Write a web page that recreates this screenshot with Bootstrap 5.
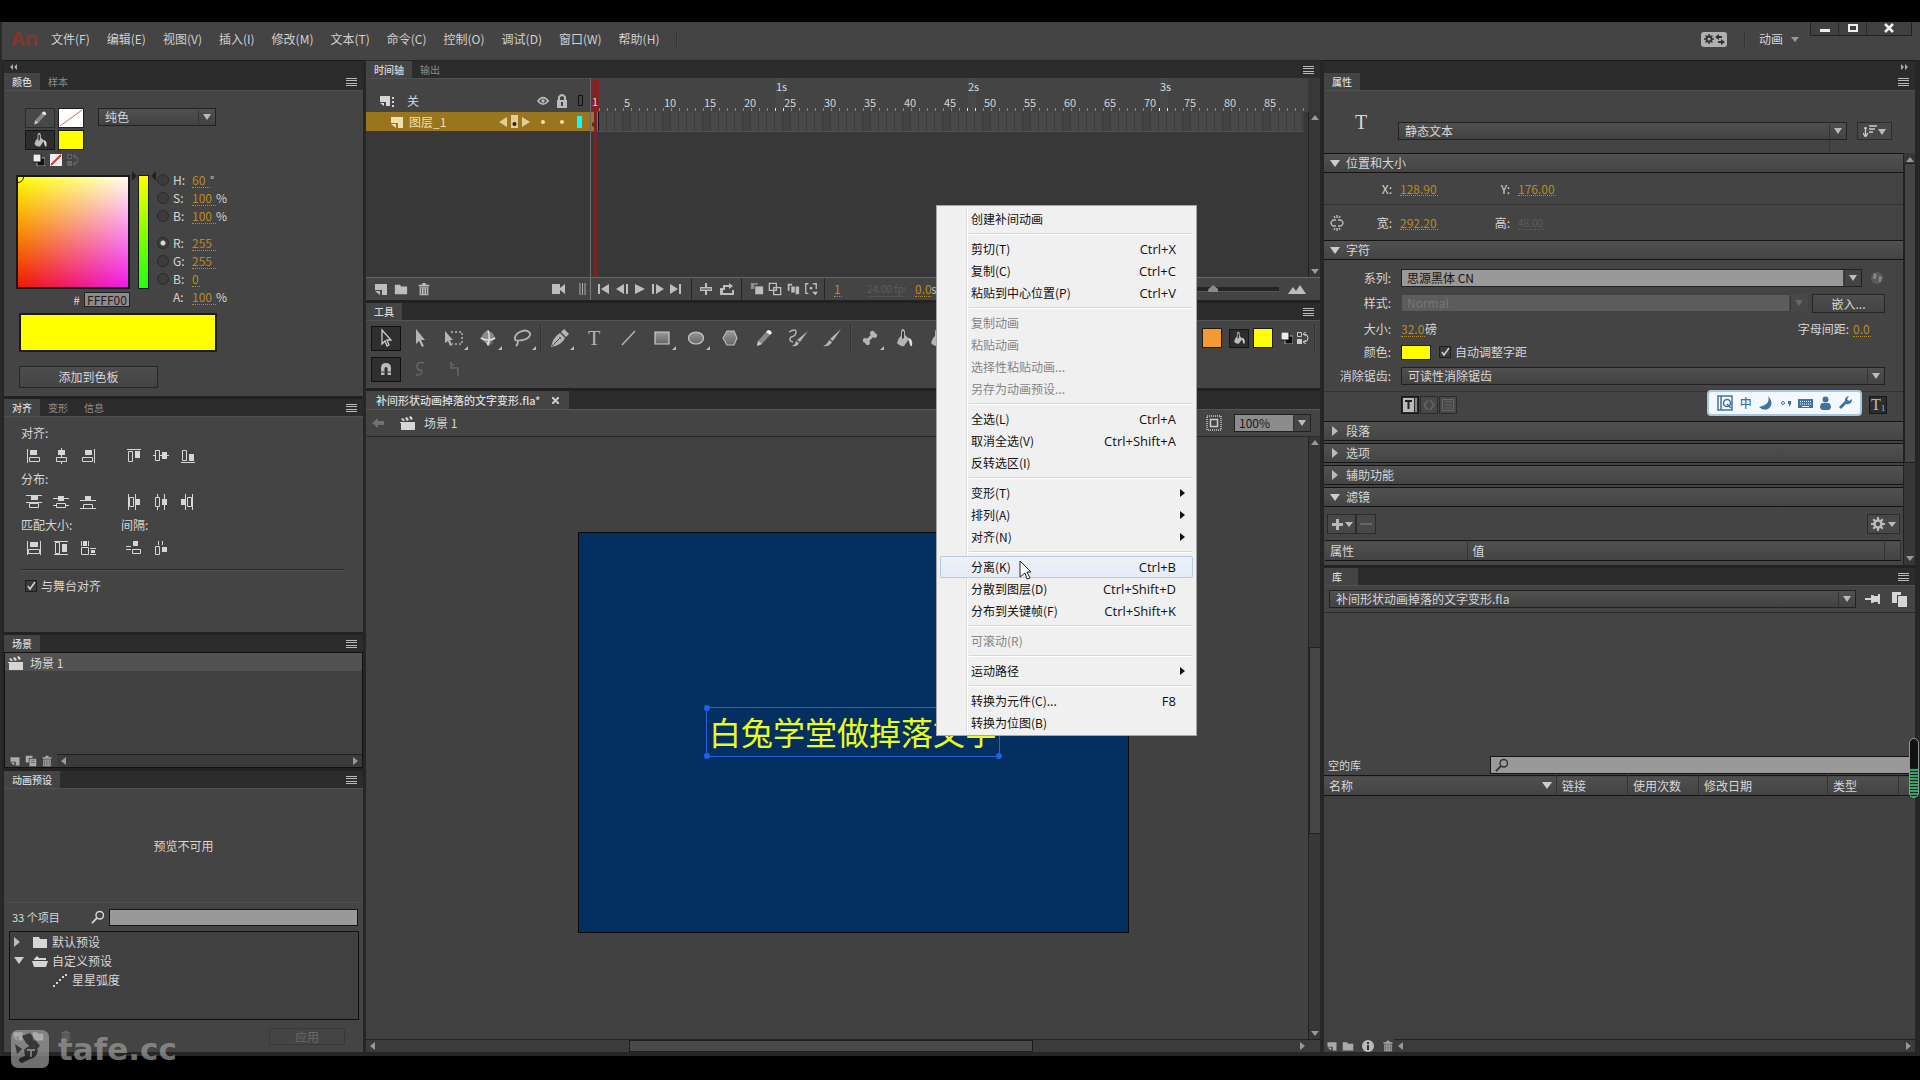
<!DOCTYPE html>
<html lang="zh-CN">
<head>
<meta charset="utf-8">
<meta name="viewport" content="width=device-width, initial-scale=1">
<title>Animate - 补间形状动画掉落的文字变形.fla</title>
<link href="https://cdn.jsdelivr.net/npm/bootstrap@5.3.0/dist/css/bootstrap.min.css" rel="stylesheet">
<style>
:root{--pn:#444;--strip:#2c2c2c;--edge:#1c1c1c;--ink:#d6d6d6;--hot:#b98a1e}
body{margin:0;height:100vh;background:#000;color:var(--ink);font:12px/18px "Noto Sans CJK SC","Noto Sans",sans-serif;overflow:hidden}
button,input,select{font:inherit;color:inherit;border-radius:0;padding:0;margin:0}
button{background:none;border:0}
svg{display:block;fill:currentColor;flex:none}
.i16{width:16px;height:16px}.i12{width:12px;height:12px}.i14{width:14px;height:14px}.i20{width:20px;height:20px}
.appwin{margin:22px 0 24px;background:#3a3a3a;border-left:2px solid #2a2a2a;min-height:0}
.menubar{height:38px;background:var(--pn);padding-bottom:4px}
.menubar nav{gap:17px;padding-left:9px}
.menubar .wsp{gap:13px;padding-right:11px}
.menubar a{color:#d0d0d0;text-decoration:none}
.logo-an{font:bold 20px/24px "Open Sans",sans-serif;color:#83362f;width:40px;padding-left:9px}
.vsep{width:1px;height:16px;background:#333;border-right:1px solid #4c4c4c;box-sizing:content-box}
.winbtns{height:14px;border:1px solid #222;border-top:0;margin-right:8px;background:#404040}
.winbtns button{height:13px;width:28px;border-right:1px solid #2a2a2a;color:#eee;padding:0}
.winbtns button:last-child{width:44px;border:0}
.cols{gap:3px;padding:0 5px 4px 2px;background:#262626;min-height:0}
.leftcol{width:359px}.rightcol{width:591px;margin-left:1px}
.midcol{min-width:0;padding-top:1px}
.strip{height:13px;background:#2b2b2b;border-top:1px solid var(--edge);color:#aaa;padding:0 6px}
.tabs{height:17px;background:var(--strip);font-size:10px;line-height:17px;color:#8e8e8e;padding-right:5px}
.tabs button{padding:0 8px;height:17px;line-height:15px}
.tabs .on{background:#444;color:#d8d8d8;font-weight:500}
.tabs .burger{margin-left:auto;color:#bbb;padding:0}
.panel{background:var(--pn);border-top:1px solid #505050}
.panelgap{border-top:3px solid #222}
.combo{appearance:none;background:linear-gradient(#505050,#424242);border:1px solid #222;height:18px;line-height:16px;padding:0 20px 0 6px}
.combowrap{position:relative}
.combowrap select{width:100%}
.combowrap::after{content:"";position:absolute;right:5px;top:6px;border:4px solid transparent;border-top:6px solid #bbb;border-bottom:0;pointer-events:none}
.combowrap::before{content:"";position:absolute;right:17px;top:2px;bottom:2px;border-left:1px solid #333;pointer-events:none}
.kindsel{width:118px;margin-left:14px}
.toolbtn{display:flex;align-items:center;justify-content:center;border:1px solid #2c2c2c;background:#484848;color:#bbb}
.toolbtn.down{background:#2d2d2d;border-color:#161616}
.swatch{border:1px solid #1c1c1c}
.yel{background:#ff0}.org{background:#f59a33}
.sq{width:20px;height:20px}
.hot{background:none;border:0;border-bottom:1px dotted var(--hot);color:var(--hot);height:15px;line-height:14px;padding:0}
.hot:disabled{color:#5c5c5c;border-color:#5c5c5c;-webkit-text-fill-color:#5c5c5c;font-size:10px}
.w8{width:8px}.w16{width:18px}.w22{width:24px}.w34{width:38px}
.cbody{height:306px;padding:17px 0 0 21px}
.pair{gap:2px 3px;display:grid;grid-template-columns:30px 26px;grid-auto-rows:20px}
.chips{gap:5px;margin:4px 0 0 8px}
.picker{margin:5px 0 0 -9px}
.pick{width:114px;height:114px;border:2px solid #181818;background:linear-gradient(90deg,#000,#00e),linear-gradient(#ff0,#f01800);background-blend-mode:screen;position:relative;overflow:hidden}
.pick::after{content:"";position:absolute;left:-6px;top:-6px;width:12px;height:12px;border:1px solid #222;border-radius:50%}
.hue{width:11px;height:114px;border:1px solid #181818;background:linear-gradient(#ff0,#8f0 50%,#2f1);position:relative}
.hue::before,.hue::after{content:"";position:absolute;top:-5px;border:5px solid transparent}
.hue::before{left:-7px;border-left-color:#222;border-right:0}.hue::after{right:-8px;border-right-color:#222;border-left:0}
.vals{margin-left:8px}
.vals>div{height:18px;display:flex;align-items:center}
.vals .gaptop{margin-top:9px}
.vals label{width:23px;padding-left:4px}
.vals .noradio{width:12px}
.hexrow{height:15px;line-height:15px;margin-top:3px}
.hexbox{width:46px;height:15px;background:#8d8a8d;color:#1d1d1d;border:1px solid #222;text-align:center;line-height:13px}
.bigsw{width:198px;height:39px;margin:6px 0 14px -6px;border-width:2px}
.addbtn{width:139px;margin-left:-6px}
input[type=radio]{appearance:none;width:12px;height:12px;border:1px solid #2b2b2b;border-radius:50%;background:#3c3c3c}
input[type=radio]:checked{background:radial-gradient(circle,#d8d8d8 2px,#3c3c3c 3px)}
input[type=checkbox]{appearance:none;width:12px;height:12px;border:1px solid #1e1e1e;background:#3b3b3b url("data:image/svg+xml,%3Csvg xmlns='http://www.w3.org/2000/svg' viewBox='0 0 10 10'%3E%3Cpath d='M2 5l2 3 5-7' fill='none' stroke='%23ccc' stroke-width='1.6'/%3E%3C/svg%3E")}
.flatbtn{border:1px solid #262626;background:linear-gradient(#4d4d4d,#434343);height:22px;line-height:20px;text-align:center}
.flatbtn:disabled{color:#686868;border-color:#3a3a3a;background:#444}
.applybtn{width:76px;height:17px;line-height:15px}
.embedbtn{width:73px;height:19px;line-height:17px}
.abody{height:216px;padding:5px 0 0 17px}
.abody .lb{height:22px;line-height:22px}
.abody .ic{height:24px;display:flex;align-items:center;margin-left:-1px}
.abody .ic button{width:27px;display:flex;justify-content:center}
.abody .half{width:100px}
.rule{height:2px;background:#2e2e2e;border-bottom:1px solid #505050;margin:9px 18px 4px 0}
.listbox{background:#404040;border:1px solid #111}
.sbody{height:116px}
.sbody .item{background:#515151;height:18px;gap:6px;padding:1px 0 0 3px}
.sicons{width:52px}
.foot{height:13px;color:#aaa}
.sbar{background:#3b3b3b;border-top:1px solid #222;color:#777}
.search{background:#999;border:1px solid #151515;color:#111;height:17px}
.preview{height:113px}
.findrow{padding:5px 5px 5px 8px;border-top:1px solid #4c4c4c}
.findrow span{font-size:11px;width:79px}
.tree{margin:0 4px 0 5px}
.tree>div{height:19px;display:flex;align-items:center}
.tree .kid{padding-left:42px}
.pfoot{height:32px;padding:0 18px 0 8px}
/* timeline */
.tl{height:199px;background:#383838}
.tlhead{height:34px;background:#444}
.layhead{padding:10px 6px 0 13px;border-top:1px solid #505050}
.lay{width:225px;border-right:1px solid #6a6a6a}
.layrow{height:19px;background:#99761d;color:#f2dfb0;padding:0 8px 0 23px}
.layrow .tri-l,.layrow .tri-r{border-width:5px}
.layrow .tri-l{border-right:8px solid #e4cc96;border-left:0}
.layrow .tri-r{border-left:8px solid #e4cc96;border-right:0}
.ruler{height:34px;background:#444;display:flex;overflow:hidden;margin-right:4px;padding-left:1px}
.ruler i{flex:none;width:8px;position:relative;font-style:normal;font-size:11px;white-space:nowrap}
.ruler i::after{content:"";position:absolute;right:0;bottom:1px;width:1px;height:3px;background:#888}
.ruler .sec{background:#494949}.ruler .sec::after{background:#fff;box-shadow:-8px 0 #fff}
.ruler b{position:absolute;left:0;font-weight:400;line-height:14px}
.ruler .fr{bottom:3px}.ruler .se{top:1px}
.frames{height:20px;margin-right:4px;background:repeating-linear-gradient(90deg,transparent 0 7px,#3b3b3b 7px 8px),repeating-linear-gradient(90deg,#484848 0 32px,#424242 32px 40px);border-bottom:1px solid #525252}
.phead{left:-2px;top:2px;width:10px;height:32px;background:#7c2426;border:1px solid #902226;line-height:40px;font-size:11px;padding-left:2px}
.pline{left:3px;top:34px;bottom:0;width:3px;background:#752528}
.pkey{left:0;top:34px;width:8px;height:19px;background:#a5722f;border-right:1px solid #111}
.pkey::after{content:"";position:absolute;left:1px;top:10px;width:5px;height:5px;border-radius:50%;background:#6d1d12}
.vbar{width:12px;background:#373737;border-left:1px solid #222;display:flex;flex-direction:column;align-items:center;justify-content:space-between;color:#888;padding:3px 0}
.vbar.under{margin-top:34px}
.tri-u,.tri-d{border:4px solid transparent;width:0;height:0}
.tri-u{border-bottom:5px solid #999;border-top:0}.tri-d{border-top:5px solid #999;border-bottom:0}
.tri-l,.tri-r{border:4px solid transparent;width:0;height:0}
.tri-l{border-right:5px solid #999;border-left:0}.tri-r{border-left:5px solid #999;border-right:0}
.ctl{height:23px;border-top:1px solid #686868;background:#444;color:#bdbdbd}
.ctl .layctl{width:225px;border-right:1px solid #777;height:22px;padding:0 4px 0 7px;gap:5px}
.ctl .seg{height:22px;display:flex;align-items:center;border-right:1px solid #262626;padding-left:8px}
.ctl .play{width:101px;padding-left:4px}.ctl .play button{width:18px}
.ctl .loop{width:50px;gap:8px}.ctl .onion{width:83px;gap:4px}
.ctl button,.tools button{display:flex;align-items:center;justify-content:center}
.fno{margin-left:9px}.fps{width:39px;margin-left:25px}.fsec{width:16px;margin-left:9px}
.hill{margin:0 14px 0 9px}
.zoomsl{appearance:none;height:5px;background:#252525;width:108px;border-bottom:1px solid #555}
.zoomsl::-webkit-slider-thumb{appearance:none;width:10px;height:7px;background:#8a8a8a;clip-path:polygon(50% 0,100% 60%,100% 100%,0 100%,0 60%)}
.tools{height:68px;border-top:1px solid #525252;background:#444;padding:4px 3px 0 5px;color:#b5b5b5}
.tools .trow{height:26px;margin-bottom:5px}
.tools .t{width:34px;height:26px;position:relative}
.tools .more::after{content:"";position:absolute;right:3px;bottom:1px;border:2px solid transparent;border-right-color:#bbb;border-bottom-color:#bbb}
.tools .box{width:30px;height:25px;border:1px solid #111;background:#2f2f2f;margin-right:2px}
.tools .vsep{height:28px;margin:0 1px}
.tools .off{color:#666}
.tglyph{font:20px/24px 'Liberation Serif',serif!important}
.fillbtn{width:20px;height:19px;margin:0 4px 0 7px}
.doctab{height:18px;background:var(--strip);font-size:11px;font-weight:500}
.doctab .on{background:#444;padding:0 10px;gap:12px;line-height:17px;color:#dcdcdc}
.scenebar{height:28px;background:#444;border-top:1px solid #555;border-bottom:1px solid #2b2b2b;padding:0 9px 0 6px}
.zoombox{width:77px;margin-left:12px}
.zoombox select{background:linear-gradient(90deg,#8c8c8c 58px,#444 58px);color:#1a1a1a;padding-left:4px}
.work{background:#414141;padding:0 0 11px 33px}
.stage{width:551px;height:401px;background:#042f61;border:1px solid #0a0a0a}
.txt{width:294px;height:50px;border:1px solid #2a5fd6;color:#e9fb22;font-size:32px;line-height:46px;padding-left:2px;white-space:nowrap;position:relative;margin:-2px 0 0 127px}
.txt i{position:absolute;width:6px;height:6px;border-radius:50%;background:#1a62f0}
.txt .tl-h{left:-3px;top:-3px}.txt .bl-h{left:-3px;bottom:-3px}.txt .br-h{right:-3px;bottom:-3px}
.vthumb{flex:none;width:12px;height:187px;background:#454545;border:1px solid #222;margin-top:4px}
.hbar{height:13px;padding:0 15px 0 4px}
.hthumb{width:404px;height:12px;background:#4a4a4a;border:1px solid #1c1c1c;margin-right:14px}
/* properties */
.kind{height:63px;padding-left:31px}
.kind .big{padding-top:19px;width:43px}
.kind .combowrap{margin-top:31px}
.kind .toolbtn{width:35px;height:18px;margin:31px 23px 0 10px}
.props{height:412px;background:#444}
.sect{height:20px;border:1px solid #141414;border-width:1px 0;background:linear-gradient(#515151,#444);line-height:18px;padding-left:6px;gap:6px;display:flex;align-items:center;width:100%;text-align:left}
.sect+.sect{margin-top:2px}
.caret-d{border:5px solid transparent;border-top:7px solid #ccc;border-bottom:0}
.caret-r{border:5px solid transparent;border-left:6px solid #bbb;border-right:0;margin:0 2px}
.xy{height:32px;border-bottom:1px solid #333}.wh{height:35px}
.xy label,.wh label{width:68px;text-align:right;margin-right:8px}
.xy .hot+label,.wh .hot+label{width:72px}
.wh svg{margin-left:5px}.wh svg+label{width:47px}
.wh .hot:disabled{width:28px}
.prow{display:flex;align-items:center;padding-left:77px;height:24px}
.plab{margin-left:-77px;width:67px;text-align:right;margin-right:10px;flex:none}
.r1{margin-top:8px;height:20px}.r2{margin-top:4px;height:22px}.r3{margin-top:4px;height:22px}
.r6{margin-top:3px;height:30px;border-top:1px solid #333;gap:1px;padding-bottom:4px}
.r3 .w16{margin:0 32px 0 4px}
.lightsel{width:461px}.dimsel{width:407px}.aasel{width:484px}
.lightsel select{background:linear-gradient(#999,#999);border-right:19px solid #444;color:#151515;outline:1px solid #222;outline-offset:-1px;padding-left:5px}
.dimsel select{background:#5c5c5c;color:#757575;border-color:#444;border-right:19px solid #484848;padding-left:5px;opacity:1}
.dimsel::after{border-top-color:#666}
.colbtn{width:30px;height:15px;margin-right:8px}
.mini{width:18px;height:18px}
.subt{font:16px/16px 'Liberation Serif',serif}
.subt span{font-size:8px;align-self:end;line-height:8px}
.fbar{padding:7px 3px 6px}.fbar button{height:20px;width:20px}.fbar .wide{width:29px}.fbar .gearb{width:33px}
.gridx th{font-weight:400;height:20px;line-height:17px;padding:0 0 0 5px;border-right:1px solid #333;background:linear-gradient(#505050,#434343);border-top:1px solid #151515;border-bottom:1px solid #151515}
.ftable{margin:0 2px 0 1px}
.c142{width:142px}.c16{width:16px}.c71{width:71px}.c129{width:129px}
.pbar{padding:4px 0}.pbar .vthumb{height:300px;margin:0 0 92px}
.libbar{height:28px;padding:0 8px 0 5px;border-bottom:1px solid #2e2e2e}
.libbar .pin{margin:0 11px 0 9px}
.libprev{background:#444;height:141px}
.libfind{background:#444;height:21px;padding-left:4px}
.libfind span{width:162px;font-size:11px}
.libfind .search{margin-right:5px;height:18px}
.liblist{background:#404040}
.libicons{width:70px;padding-left:2px}
/* floating menu */
.ctx{left:936px;top:205px;width:261px;padding:2px 1px 1px;border:1px solid #a5a5a5;border-radius:0;background:#f0f0f0;color:#111;z-index:20;font-family:"Noto Sans CJK SC",sans-serif;min-width:0;font-size:12px;display:block}
.ctx::before{content:"";position:absolute;left:29px;top:2px;bottom:2px;width:2px;border-left:1px solid #dcdcdc;border-right:1px solid #fff}
.ctx .dropdown-item{height:22px;line-height:20px;padding:0 16px 0 30px;color:#111;display:flex;justify-content:space-between;align-items:center;position:relative;border:1px solid transparent;margin:0 2px;width:auto;min-width:253px}
.ctx .dropdown-item:disabled{color:#858585}
.ctx .dropdown-item.hov{border-color:#b4cde4;background:linear-gradient(#eff2f7,#e4ecf7);border-radius:2px}
.ctx .dropdown-divider{margin:3px 3px 3px 31px;height:2px;border:0;border-top:1px solid #d8d8d8;border-bottom:1px solid #fff;opacity:1}
.ctx kbd{all:unset;font-family:"Open Sans",sans-serif;font-size:13px}
.ctx .sub::after{content:"";border:4px solid transparent;border-left:5px solid #111;border-right:0;margin-right:-9px}
.curs{left:1019px;top:560px;z-index:21}
.ime{left:1707px;top:390px;width:155px;height:26px;background:#f4f9ff;border:2px solid #a9c6e4;border-radius:4px;z-index:10;color:#44719f;padding:0 8px}
.ime span{font-weight:500}
.meter{left:1909px;top:738px;width:10px;height:60px;border:1px solid #8e9a8e;border-radius:5px;background:linear-gradient(#111 50%,transparent 50%),repeating-linear-gradient(#38a35a 0 2px,#123 2px 3px);z-index:5}
.wmark{left:11px;top:1030px;z-index:8;color:#9a9a9a;opacity:.72;font:bold 31px/38px "DejaVu Sans",sans-serif;gap:9px;pointer-events:none}
</style>
<script src="https://cdn.jsdelivr.net/npm/bootstrap@5.3.0/dist/js/bootstrap.bundle.min.js"></script>
</head>
<body class="d-flex flex-column">
<svg width="0" height="0" class="position-absolute"><defs>
<linearGradient id="g" x2="0" y2="1"><stop stop-color="#999"/><stop offset="1" stop-color="#666"/></linearGradient>
<symbol id="burger" viewBox="0 0 12 12"><path d="M0 2h11v1H0zM0 4h11v1H0zM0 7h11v1H0zM0 9h11v1H0z"/></symbol>
<symbol id="pencil" viewBox="0 0 20 20"><path d="M3 18l1-5 8-9 4 3-8 9z" fill="#888"/><path d="M12 4l2-2q3 0 4 3l-2 2z" fill="#eee"/><path d="M3 18l1-5 4 3z" fill="#ccc"/></symbol>
<symbol id="bucket" viewBox="0 0 20 20"><path d="M5 10q1-1 2-2V3q2-4 4 0v4l4 4-5 7q-4 1-7-3z"/><path d="M8 11V4q1-2 2 0v6z" fill="#383838"/><path d="M14 10q5 0 4 8q-2 1-2.500-3z" fill="#ddd"/></symbol>
<symbol id="page" viewBox="0 0 16 16"><path d="M2 3h12v11H9V9H2z"/><path d="M2 10l5 4v-4z"/></symbol>
<symbol id="pages" viewBox="0 0 16 16"><path d="M1 3h10v10H7V9H1zM1 10l4 3v-3zM13 4h2v2h-2zM13 8h2v2h-2zM13 12h2v2h-2z"/></symbol>
<symbol id="folder" viewBox="0 0 16 16"><path d="M1 3h6l1 2h7v9H1z"/></symbol>
<symbol id="folderopen" viewBox="0 0 16 16"><path d="M2 6l3-3 2 2h7v2H2zM0 8h16l-2 6H2z"/></symbol>
<symbol id="trash" viewBox="0 0 16 16"><path d="M6 1h4v2h4v2H2V3h4zM3 6h10v9H3z"/><path d="M5 7v7M8 7v7M11 7v7" stroke="#444"/></symbol>
<symbol id="dup" viewBox="0 0 16 16"><path d="M1 1h9v3H5v6H1z"/><path d="M6 5h9v10H6z"/><path d="M8 7h5M8 10h5" stroke="#555"/></symbol>
<symbol id="clap" viewBox="0 0 16 16"><path d="M1 8h14v7H1z"/><path d="M1 4l2-1 2 3H3zM5 3l2-1 2 3-2 1zM9 2l2-1 2 3-2 1zM0 7h15v1H0z"/></symbol>
<symbol id="lens" viewBox="0 0 16 16"><circle cx="10" cy="6" r="4.300" fill="none" stroke="currentColor" stroke-width="1.600"/><path d="M7 9l-6 6" stroke="currentColor" stroke-width="2"/></symbol>
<symbol id="eye" viewBox="0 0 16 16"><path d="M2 8q6-8 12 0q-6 7-12 0" fill="none" stroke="currentColor" stroke-width="2"/><circle cx="8" cy="8" r="2"/></symbol>
<symbol id="lock" viewBox="0 0 16 16"><path d="M3 7h10v8H3z"/><path d="M5 8V4q3-4 6 0v4" fill="none" stroke="currentColor" stroke-width="2"/><path d="M7 9h2v4H7z" fill="#444"/></symbol>
<symbol id="arrowk" viewBox="0 0 16 20"><path d="M4 2l9 10H9l2 5-2 1-2-5-3 3z" fill="none" stroke="#ccc" stroke-width="1.300"/></symbol>
<symbol id="arrow" viewBox="0 0 16 20"><path d="M4 1l9 11H9l3 6-2 1-3-6-3 3z"/></symbol>
<symbol id="xform" viewBox="0 0 20 20"><path d="M1 3l8 9H6l2 5-2 1-2-5-3 2z"/><path d="M7 4h11v12H8" fill="none" stroke="currentColor" stroke-dasharray="2 2" stroke-width="1.500"/></symbol>
<symbol id="rot3" viewBox="0 0 20 20"><circle cx="10" cy="9" r="7.500" fill="#888"/><path d="M10 0l2 2v15l-2 3-2-3V2z" fill="#ccc"/><path d="M10 0q8 5 9 11-4 4-9 4T1 11Q2 5 10 0" fill="#8a8a8a"/><path d="M1 10q9 5 18 0M10 1q3 8 0 18" fill="none" stroke="#e2e2e2" stroke-width="1.800"/><path d="M12 16h5l-6 4z" fill="#777"/></symbol>
<symbol id="lasso" viewBox="0 0 20 20"><path d="M4 13q-3-4 2-8 8-5 12 0 1 5-7 7-5 1-6 0 2 3-1 6" fill="none" stroke="currentColor" stroke-width="1.800"/></symbol>
<symbol id="pen" viewBox="0 0 20 20"><path d="M1 19q2-10 9-14l5 5q-3 7-14 9z"/><path d="M11 4l3-3 5 5-3 3z"/><path d="M2 18l7-7" stroke="#444"/><circle cx="10" cy="10" r="1" fill="#444"/></symbol>
<symbol id="brush" viewBox="0 0 20 20"><path d="M19 1L11 13l-3-2z"/><path d="M7 12l3 2q-2 5-9 4q4-1 6-6z"/></symbol>
<symbol id="brushw" viewBox="0 0 20 20"><path d="M20 3l-8 11-3-2zM8 13l3 2q-2 4-7 3q3-1 4-5z"/><path d="M1 4q7-4 7 0t-5 5q-3 4 2 5" fill="none" stroke="currentColor" stroke-width="1.400"/></symbol>
<symbol id="bone" viewBox="0 0 20 20"><path d="M4 16L16 4" stroke="currentColor" stroke-width="4"/><circle cx="4" cy="13" r="3"/><circle cx="7" cy="16" r="3"/><circle cx="13" cy="4" r="3"/><circle cx="16" cy="7" r="3"/></symbol>
<symbol id="fg" viewBox="0 0 12 12"><path d="M4 4h8v8H4z" fill="#111" stroke="#aaa"/><path d="M0 0h8v8H0z" fill="#eee" stroke="#111"/></symbol>
<symbol id="none" viewBox="0 0 12 12"><path d="M0 0h12v12H0z" fill="#eee"/><path d="M1 11L11 1" stroke="#c33" stroke-width="2"/></symbol>
<symbol id="swap" viewBox="0 0 12 12"><path d="M.500.500h4v4h-4z" fill="none" stroke="currentColor"/><path d="M0 7h5v5H0z"/><path d="M7 2q4 0 4 4t-4 4M9 0L6 2l3 2M9 8l-3 2 3 2" fill="none" stroke="currentColor"/></symbol>
<symbol id="gear" viewBox="0 0 16 16"><circle cx="8" cy="8" r="4" fill="none" stroke="currentColor" stroke-width="3"/><path d="M8 0v4M8 12v4M0 8h4M12 8h4M2.500 2.500l3 3M10.500 10.500l3 3M2.500 13.500l3-3M10.500 5.500l3-3" stroke="currentColor" stroke-width="2.400"/></symbol>
<symbol id="a1" viewBox="0 0 16 16"><path d="M1 1h1v14H1zM4 2h7v5H4z"/><path d="M3.500 9.500h10v4h-10z" fill="none" stroke="currentColor"/></symbol>
<symbol id="a2" viewBox="0 0 16 16"><path d="M8 0h1v16H8zM5 2h7v5H5z"/><path d="M3.500 9.500h10v4h-10z" fill="#444" stroke="currentColor"/></symbol>
<symbol id="a3" viewBox="0 0 16 16"><path d="M14 1h1v14h-1zM5 2h7v5H5z"/><path d="M2.500 9.500h10v4h-10z" fill="none" stroke="currentColor"/></symbol>
<symbol id="a4" viewBox="0 0 16 16"><path d="M1 1h14v1H1zM9 3h5v7H9z"/><path d="M2.500 3.500h4v10h-4z" fill="none" stroke="currentColor"/></symbol>
<symbol id="a5" viewBox="0 0 16 16"><path d="M0 7h16v1H0zM9 4h5v7H9z"/><path d="M2.500 2.500h4v10h-4z" fill="#444" stroke="currentColor"/></symbol>
<symbol id="a6" viewBox="0 0 16 16"><path d="M1 14h14v1H1zM9 6h5v7H9z"/><path d="M2.500 2.500h4v10h-4z" fill="none" stroke="currentColor"/></symbol>
<symbol id="d1" viewBox="0 0 16 16"><path d="M0 1h16v1H0zM0 8h16v1H0zM5 2h7v4H5z"/><path d="M3.500 9.500h9v4h-9z" fill="none" stroke="currentColor"/></symbol>
<symbol id="d2" viewBox="0 0 16 16"><path d="M0 4h16v1H0zM0 11h16v1H0zM5 2h6v5H5z"/><path d="M3.500 9.500h9v4h-9z" fill="#444" stroke="currentColor"/></symbol>
<symbol id="d3" viewBox="0 0 16 16"><path d="M0 6h16v1H0zM0 14h16v1H0zM5 2h6v4H5z"/><path d="M3.500 10.500h9v4h-9z" fill="none" stroke="currentColor"/></symbol>
<symbol id="s1" viewBox="0 0 16 16"><path d="M1 1h1v14H1zM14 1h1v14h-1zM4 2h8v5H4z"/><path d="M2.500 9.500h11v4h-11z" fill="none" stroke="currentColor"/></symbol>
<symbol id="s3" viewBox="0 0 16 16"><path d="M1 1h1v5H1zM8 1h1v5H8zM3 1h4v5H3zM10 8h6v1h-6zM10 14h6v1h-6zM11 10h4v3h-4z"/><path d="M1.500 7.500h7v7h-7z" fill="none" stroke="currentColor"/></symbol>
<symbol id="p1" viewBox="0 0 16 16"><path d="M0 6h5v1H0zM0 9h5v1H0zM7 1h5v5H7z"/><path d="M6.500 9.500h8v4h-8z" fill="none" stroke="currentColor"/></symbol>
<symbol id="onion" viewBox="0 0 16 16"><path d="M1 1h8v2H5v5H1z" opacity=".6"/><path d="M6 5h9v9H6z"/></symbol>
<symbol id="onion2" viewBox="0 0 16 16"><path d="M1.500 1.500h8v8h-8zM6.500 6.500h8v8h-8z" fill="none" stroke="currentColor" stroke-width="1.500"/></symbol>
<symbol id="onion3" viewBox="0 0 16 16"><path d="M2 2h5v2H4v6H2z"/><path d="M6 5h4v7H6zM11 5h4v9h-4z"/></symbol>
<symbol id="mark-r" viewBox="0 0 16 16"><path d="M5 2H2v11h3M10 2h4v6" fill="none" stroke="currentColor" stroke-width="1.500"/><circle cx="8" cy="7" r="1.500"/><path d="M9 11h7l-3 4z"/></symbol>
</defs></svg>

<div class="appwin flex-grow-1 d-flex flex-column">
<header class="menubar d-flex align-items-center">
 <span class="logo-an">An</span>
 <nav class="d-flex align-items-center" aria-label="菜单">
 <a href="#">文件(F)</a><a href="#">编辑(E)</a><a href="#">视图(V)</a><a href="#">插入(I)</a><a href="#">修改(M)</a><a href="#">文本(T)</a><a href="#">命令(C)</a><a href="#">控制(O)</a><a href="#">调试(D)</a><a href="#">窗口(W)</a><a href="#">帮助(H)</a><span class="vsep"></span></nav>
 <div class="wsp ms-auto d-flex align-items-center">
  <button aria-label="同步设置" class="me-1"><svg width="26" height="15" viewBox="0 0 26 15"><rect width="26" height="15" rx="3" fill="#b0b0b0"/><g fill="#333" color="#333"><use href="#gear" x="3" y="2" width="10" height="10"/><path d="M14 5l4-3v2h3v2h-3v2zM24 10l-4-3v2h-3v2h3v2z"/></g></svg></button>
  <span class="vsep"></span>
  <button class="d-flex align-items-center">动画<i class="tri-d ms-2"></i></button>
 </div>
 <div class="winbtns d-flex align-self-start"><button aria-label="最小化"><svg class="mx-auto" width="12" height="12"><path d="M1 6h10v3H1z"/></svg></button><button aria-label="最大化"><svg class="mx-auto" width="12" height="12"><path d="M2 2h8v6H2z" fill="none" stroke="#eee" stroke-width="2"/></svg></button><button aria-label="关闭"><svg class="mx-auto" width="12" height="12"><path d="M2 1l8 8M10 1l-8 8" stroke="#eee" stroke-width="2.500"/></svg></button></div>
</header>

<div class="cols d-flex flex-grow-1">
<!-- left dock -->
<aside class="leftcol d-flex flex-column flex-shrink-0">
 <div class="strip d-flex align-items-center"><svg width="8" height="6"><path d="M3 0v6L0 3zM7 0v6L4 3z"/></svg></div>
 <div class="tabs d-flex"><button class="on">颜色</button><button>样本</button><button class="burger" aria-label="选项"><svg class="i12"><use href="#burger"/></svg></button></div>
 <section class="panel cbody">
  <div class="d-flex align-items-start">
   <div class="pair"><button class="toolbtn" aria-label="笔触颜色"><svg class="i16"><use href="#pencil"/></svg></button><button class="swatch bg-white" aria-label="无笔触"><svg width="24" height="18"><path d="M1 17L23 1" stroke="#c66"/></svg></button>
   <button class="toolbtn down" aria-label="填充颜色"><svg class="i16"><use href="#bucket"/></svg></button><button class="swatch yel" aria-label="填充 FFFF00"></button></div>
   <div class="combowrap kindsel"><select class="combo" aria-label="颜色类型"><option>纯色</option></select></div>
  </div>
  <div class="chips d-flex"><svg class="i12"><use href="#fg"/></svg><svg class="i12"><use href="#none"/></svg><svg class="i12" color="#666"><use href="#swap"/></svg></div>
  <div class="picker d-flex">
   <div><div class="pick mt-1"></div><div class="hexrow d-flex justify-content-end align-items-center gap-1"><label for="hex">#</label><input id="hex" class="hexbox" value="FFFF00"></div></div>
   <div class="hue mt-1 ms-2"></div>
   <div class="vals">
    <div><input type="radio" name="ch" id="rh"><label for="rh">H:</label><input class="hot w16" aria-label="H" value="60"><span>°</span></div>
    <div><input type="radio" name="ch" id="rs"><label for="rs">S:</label><input class="hot w22" aria-label="S" value="100"><span>%</span></div>
    <div><input type="radio" name="ch" id="rb"><label for="rb">B:</label><input class="hot w22" aria-label="亮度" value="100"><span>%</span></div>
    <div class="gaptop"><input type="radio" name="ch" id="rr" checked><label for="rr">R:</label><input class="hot w22" aria-label="R" value="255"></div>
    <div><input type="radio" name="ch" id="rg"><label for="rg">G:</label><input class="hot w22" aria-label="G" value="255"></div>
    <div><input type="radio" name="ch" id="rbl"><label for="rbl">B:</label><input class="hot w8" aria-label="B" value="0"></div>
    <div><i class="noradio"></i><label for="al">A:</label><input id="al" class="hot w22" value="100"><span>%</span></div>
   </div>
  </div>
  <div class="swatch yel bigsw"></div>
  <button class="flatbtn addbtn">添加到色板</button>
 </section>
 <div class="panelgap"></div>
 <div class="tabs d-flex"><button class="on">对齐</button><button>变形</button><button>信息</button><button class="burger" aria-label="选项"><svg class="i12"><use href="#burger"/></svg></button></div>
 <section class="panel abody">
  <div class="lb">对齐:</div>
  <div class="ic"><div class="d-flex half"><button aria-label="左对齐"><svg class="i16"><use href="#a1"/></svg></button><button aria-label="水平居中"><svg class="i16"><use href="#a2"/></svg></button><button aria-label="右对齐"><svg class="i16"><use href="#a3"/></svg></button></div><button aria-label="顶对齐"><svg class="i16"><use href="#a4"/></svg></button><button aria-label="垂直居中"><svg class="i16"><use href="#a5"/></svg></button><button aria-label="底对齐"><svg class="i16"><use href="#a6"/></svg></button></div>
  <div class="lb">分布:</div>
  <div class="ic"><div class="d-flex half"><button aria-label="顶部分布"><svg class="i16"><use href="#d1"/></svg></button><button aria-label="垂直居中分布"><svg class="i16"><use href="#d2"/></svg></button><button aria-label="底部分布"><svg class="i16"><use href="#d3"/></svg></button></div><button aria-label="左侧分布"><svg class="i16" viewBox="0 0 16 16"><path d="M2 0h1v16H2zM9 0h1v16H9zM10 5h4v6h-4z"/><path d="M3.500 3.500h4v9h-4z" fill="none" stroke="currentColor"/></svg></button><button aria-label="水平居中分布"><svg class="i16" viewBox="0 0 16 16"><path d="M4 0h1v16H4zM11 0h1v16h-1zM9 5h5v6H9z"/><path d="M2.500 3.500h4v9h-4z" fill="#444" stroke="currentColor"/></svg></button><button aria-label="右侧分布"><svg class="i16" viewBox="0 0 16 16"><path d="M5 0h1v16H5zM12 0h1v16h-1zM1 5h4v6H1z"/><path d="M7.500 3.500h4v9h-4z" fill="none" stroke="currentColor"/></svg></button></div>
  <div class="d-flex lb"><div class="half">匹配大小:</div><div>间隔:</div></div>
  <div class="ic"><div class="d-flex half"><button aria-label="匹配宽度"><svg class="i16"><use href="#s1"/></svg></button><button aria-label="匹配高度"><svg class="i16" viewBox="0 0 16 16"><path d="M1 1h14v1H1zM1 14h14v1H1zM9 4h5v8H9z"/><path d="M2.500 2.500h4v11h-4z" fill="none" stroke="currentColor"/></svg></button><button aria-label="匹配宽和高"><svg class="i16"><use href="#s3"/></svg></button></div><button aria-label="垂直平均间隔"><svg class="i16"><use href="#p1"/></svg></button><button aria-label="水平平均间隔"><svg class="i16" viewBox="0 0 16 16"><path d="M5 1h1v4H5zM9 1h1v4H9zM9 7h5v5H9z"/><path d="M2.500 6.500h4v8h-4z" fill="none" stroke="currentColor"/></svg></button></div>
  <div class="rule"></div>
  <div class="d-flex align-items-center gap-1 ms-1 lb"><input type="checkbox" id="stg" checked><label for="stg">与舞台对齐</label></div>
 </section>
 <div class="panelgap"></div>
 <div class="tabs d-flex"><button class="on">场景</button><button class="burger" aria-label="选项"><svg class="i12"><use href="#burger"/></svg></button></div>
 <section class="listbox sbody d-flex flex-column">
  <div class="item d-flex align-items-center"><svg class="i16"><use href="#clap"/></svg>场景 1</div>
  <div class="mt-auto d-flex foot"><div class="sicons d-flex align-items-center justify-content-between px-1"><svg class="i12"><use href="#page"/></svg><svg class="i12"><use href="#dup"/></svg><svg class="i12"><use href="#trash"/></svg></div><div class="sbar flex-grow-1 d-flex align-items-center justify-content-between px-1"><i class="tri-l"></i><i class="tri-r"></i></div></div>
 </section>
 <div class="panelgap"></div>
 <div class="tabs d-flex"><button class="on">动画预设</button><button class="burger" aria-label="选项"><svg class="i12"><use href="#burger"/></svg></button></div>
 <section class="panel flex-grow-1 d-flex flex-column">
  <div class="preview d-flex align-items-center justify-content-center">预览不可用</div>
  <div class="findrow d-flex align-items-center"><span>33 个项目</span><svg class="i14"><use href="#lens"/></svg><input class="search flex-grow-1 ms-1" aria-label="搜索预设"></div>
  <div class="listbox tree flex-grow-1">
   <div><i class="caret-r ms-1 me-2"></i><svg class="i16 mx-1"><use href="#folder"/></svg>默认预设</div>
   <div><i class="caret-d ms-1"></i><svg class="i16 ms-2 me-1"><use href="#folderopen"/></svg>自定义预设</div>
   <div class="kid"><svg class="i16 me-1" viewBox="0 0 16 16"><path d="M1 13h2v2H1zM4 10h2v2H4zM7 7h2v2H7zM10 4h2v2h-2zM13 2h2v2h-2z"/></svg>星星弧度</div>
  </div>
  <div class="pfoot d-flex align-items-center"><svg class="i12"><use href="#page"/></svg><svg class="i12 ms-2"><use href="#folder"/></svg><svg class="i12 ms-3" color="#666"><use href="#trash"/></svg><button class="flatbtn applybtn ms-auto" disabled>应用</button></div>
 </section>
</aside>

<!-- centre -->
<main class="midcol flex-grow-1 d-flex flex-column">
 <div class="tabs d-flex"><button class="on">时间轴</button><button>输出</button><button class="burger" aria-label="选项"><svg class="i12"><use href="#burger"/></svg></button></div>
 <section class="tl d-flex">
  <div class="lay flex-shrink-0">
   <div class="tlhead layhead d-flex align-items-center"><svg class="i16"><use href="#pages"/></svg><span class="ms-2 ps-1">关</span><svg class="i14 ms-auto" color="#bbb"><use href="#eye"/></svg><svg class="i16 ms-1" color="#bbb"><use href="#lock"/></svg><svg width="6" height="12" class="ms-2"><path d="M.500.500h4v10h-4z" fill="none" stroke="#111"/></svg></div>
   <div class="layrow d-flex align-items-center"><svg class="i16"><use href="#page"/></svg><span class="ms-1">图层_1</span><i class="tri-l ms-auto"></i><svg class="mx-1" width="7" height="13"><path d="M0 0h7v13H0z" fill="#e4cc96"/><circle cx="3.500" cy="9" r="2" fill="#222"/></svg><i class="tri-r"></i><svg width="48" height="13" class="ms-1"><circle cx="9" cy="7" r="2"/><circle cx="28" cy="7" r="2"/><path d="M43 1h5v12h-5z" fill="#0ff"/></svg></div>
  </div>
  <div class="flex-grow-1 position-relative overflow-hidden">
   <div class="tlhead"><div class="ruler" id="ruler"></div></div>
   <div class="frames"></div>
   <i class="pkey position-absolute"></i><i class="pline position-absolute"></i><span class="phead position-absolute">1</span>
  </div>
  <div class="vbar under"><i class="tri-u"></i><i class="tri-d"></i></div>
 </section>
 <section class="ctl d-flex align-items-center">
  <div class="layctl d-flex align-items-center"><button aria-label="新建图层"><svg class="i16"><use href="#page"/></svg></button><button aria-label="新建文件夹"><svg class="i14"><use href="#folder"/></svg></button><button aria-label="删除" class="ms-1"><svg class="i14"><use href="#trash"/></svg></button><button class="ms-auto me-2" aria-label="添加摄像头"><svg width="14" height="10"><path d="M0 0h8v4l5-4v10L8 6v4H0z"/></svg></button><svg width="7" height="12"><path d="M1 0v12M3.500 0v12M6 0v12" stroke="#aaa"/></svg></div>
  <div class="seg play"><button aria-label="首帧"><svg width="12" height="10"><path d="M0 0h2v10H0zM11 0v10L3 5z"/></svg></button><button aria-label="后退"><svg width="12" height="10"><path d="M8 0v10L0 5zM10 0h2v10h-2z"/></svg></button><button aria-label="播放"><svg width="10" height="10"><path d="M0 0l10 5-10 5z"/></svg></button><button aria-label="前进"><svg width="12" height="10"><path d="M0 0h2v10H0zM4 0l8 5-8 5z"/></svg></button><button aria-label="末帧"><svg width="12" height="10"><path d="M0 0l8 5-8 5zM9 0h2v10H9z"/></svg></button></div>
  <div class="seg loop"><button aria-label="帧居中"><svg width="12" height="12"><path d="M0 4h5V0h2v4h5v4H7v4H5V8H0z"/><path d="M1 6h10" stroke="#444"/></svg></button><button aria-label="循环"><svg width="14" height="12"><path d="M1 5h2v5h9V7h2v5H0V5zM3 2h6V0l4 3-4 3V4H5v3H3z"/></svg></button></div>
  <div class="seg onion"><button aria-label="绘图纸外观"><svg class="i14"><use href="#onion"/></svg></button><button aria-label="绘图纸轮廓"><svg class="i14"><use href="#onion2"/></svg></button><button aria-label="编辑多帧"><svg class="i14"><use href="#onion3"/></svg></button><button aria-label="修改标记"><svg class="i14"><use href="#mark-r"/></svg></button></div>
  <input class="hot w8 fno flex-shrink-0" aria-label="当前帧" value="1"><input class="hot fps" disabled aria-label="帧速率" value="24.00 fps"><input class="hot fsec" aria-label="运行时间" value="0.0"><span>s</span>
  <input type="range" class="zoomsl ms-auto" min="0" max="100" value="38" aria-label="时间轴缩放"><svg class="hill" width="18" height="9"><path d="M0 9l5-7 3 4 4-6 6 9z"/></svg>
 </section>
 <div class="panelgap"></div>
 <div class="tabs d-flex"><button class="on">工具</button><button class="burger" aria-label="选项"><svg class="i12"><use href="#burger"/></svg></button></div>
 <section class="tools">
  <div class="trow d-flex align-items-center">
   <button class="box" aria-label="选择"><svg class="i20"><use href="#arrowk"/></svg></button>
   <button class="t" aria-label="部分选取"><svg class="i20"><use href="#arrow"/></svg></button><button class="t more" aria-label="任意变形"><svg class="i20"><use href="#xform"/></svg></button><button class="t more" aria-label="3D旋转"><svg class="i16"><use href="#rot3"/></svg></button><button class="t more" aria-label="套索"><svg class="i20"><use href="#lasso"/></svg></button>
   <span class="vsep"></span>
   <button class="t more" aria-label="钢笔"><svg class="i20"><use href="#pen"/></svg></button><button class="t tglyph" aria-label="文本">T</button><button class="t" aria-label="线条"><svg class="i16"><path d="M2 15L15 1" stroke="currentColor" stroke-width="1.500"/></svg></button><button class="t more" aria-label="矩形"><svg class="i16"><path d="M1 2h14v12H1z" fill="url(#g)" stroke="#ccc" stroke-width="1.200"/></svg></button><button class="t more" aria-label="椭圆"><svg class="i16"><ellipse cx="8" cy="8" rx="7.500" ry="6" fill="url(#g)" stroke="#ccc" stroke-width="1.200"/></svg></button><button class="t" aria-label="多角星形"><svg class="i16"><path d="M5 1h7l3 7-3 7H5L1 8z" fill="url(#g)" stroke="#bbb" stroke-width="1.200"/></svg></button><button class="t" aria-label="铅笔"><svg class="i20"><use href="#pencil"/></svg></button><button class="t" aria-label="画笔"><svg class="i20"><use href="#brushw"/></svg></button><button class="t" aria-label="刷子"><svg class="i20"><use href="#brush"/></svg></button>
   <span class="vsep"></span>
   <button class="t more" aria-label="骨骼"><svg class="i16"><use href="#bone"/></svg></button><button class="t" aria-label="颜料桶"><svg class="i20"><use href="#bucket"/></svg></button><button class="t" aria-label="墨水瓶"><svg class="i20"><use href="#bucket"/></svg></button>
   <button class="swatch org sq ms-auto" aria-label="笔触"></button>
   <button class="toolbtn down fillbtn" aria-label="填充"><svg class="i14"><use href="#bucket"/></svg></button>
   <button class="swatch yel sq" aria-label="填充色"></button>
   <svg class="i12 ms-2"><use href="#fg"/></svg><svg class="i12 mx-1" color="#ccc"><use href="#swap"/></svg><span class="vsep"></span>
  </div>
  <div class="trow d-flex align-items-center"><button class="box" aria-label="贴紧至对象"><svg class="i16"><path d="M3 14V7q0-5 5-5t5 5v7h-3.500V7q-1.500-2-3 0v7z" fill="#bbb"/><path d="M3 11h3.500M9.500 11H13" stroke="#333"/></svg></button><button class="t off" aria-label="平滑"><svg class="i16"><path d="M12 2Q5 0 5 5t4 4q3 5-5 5" fill="none" stroke="currentColor" stroke-width="1.500"/></svg></button><button class="t off" aria-label="伸直"><svg class="i16"><path d="M5 1v6h7v8M5 4h3" fill="none" stroke="currentColor" stroke-width="1.500"/></svg></button></div>
 </section>
 <div class="panelgap"></div>
 <div class="doctab d-flex"><div class="on d-flex align-items-center"><span>补间形状动画掉落的文字变形.fla*</span><button aria-label="关闭文档"><svg width="7" height="7"><path d="M0 0l7 7M7 0L0 7" stroke="#ccc" stroke-width="2"/></svg></button></div></div>
 <div class="scenebar d-flex align-items-center"><svg class="i12" color="#707070"><path d="M0 6l6-5v3h6v4H6v3z"/></svg><svg class="i16 ms-3 me-2"><use href="#clap"/></svg><span>场景 1</span>
  <button class="ms-auto" aria-label="舞台居中"><svg class="i16"><path d="M1 1h14v14H1z" fill="none" stroke="#aaa" stroke-width="2" stroke-dasharray="1 1"/><path d="M4.500 4.500h7v7h-7z" fill="none" stroke="#ccc" stroke-width="1.500"/></svg></button>
  <div class="combowrap zoombox"><select class="combo" aria-label="缩放"><option>100%</option></select></div></div>
 <div class="d-flex flex-grow-1 overflow-hidden">
  <div class="work flex-grow-1 d-flex align-items-center justify-content-center"><div class="stage d-flex align-items-center"><div class="txt">白兔学堂做掉落文字<i class="tl-h"></i><i class="bl-h"></i><i class="br-h"></i></div></div></div>
  <div class="vbar"><i class="tri-u"></i><div class="vthumb"></div><i class="tri-d"></i></div>
 </div>
 <div class="sbar hbar d-flex align-items-center justify-content-between"><i class="tri-l"></i><div class="hthumb"></div><i class="tri-r"></i></div>
</main>

<!-- right dock -->
<aside class="rightcol d-flex flex-column flex-shrink-0">
 <div class="strip d-flex align-items-center justify-content-end"><svg width="8" height="6"><path d="M0 0v6l3-3zM4 0v6l3-3z"/></svg></div>
 <div class="tabs d-flex"><button class="on">属性</button><button class="burger" aria-label="选项"><svg class="i12"><use href="#burger"/></svg></button></div>
 <section class="panel kind d-flex"><span class="tglyph big">T</span>
  <div class="combowrap flex-grow-1"><select class="combo" aria-label="文本类型"><option>静态文本</option></select></div>
  <button class="toolbtn" aria-label="改变文本方向"><svg width="24" height="12"><path d="M1 3h3M2.500 3v8M0 8l2.500 4L5 8M6 1h8M6 4h6M6 7h4" fill="none" stroke="#ccc" stroke-width="1.300"/><path d="M15 4h8l-4 6z"/></svg></button></section>
 <div class="props d-flex">
 <div class="flex-grow-1 d-flex flex-column">
  <button class="sect"><i class="caret-d"></i>位置和大小</button>
  <div class="xy d-flex align-items-center"><label for="px">X:</label><input id="px" class="hot w34" value="128.90"><label for="py">Y:</label><input id="py" class="hot w34" value="176.00"></div>
  <div class="wh d-flex align-items-center"><svg class="i16"><path d="M7 5H4q-4 3 0 6h3M9 5h3q4 3 0 6H9M5 1l1 2M8 0v3M11 1l-1 2M5 15l1-2M8 16v-3M11 15l-1-2" fill="none" stroke="#bbb" stroke-width="1.400"/></svg><label for="pw">宽:</label><input id="pw" class="hot w34" value="292.20"><label for="ph">高:</label><input id="ph" class="hot" disabled value="48.00"></div>
  <button class="sect"><i class="caret-d"></i>字符</button>
  <div class="prow r1"><label class="plab" for="ff">系列:</label><div class="combowrap lightsel"><select id="ff" class="combo"><option>思源黑体 CN</option></select></div><svg class="i14 ms-2"><circle cx="7" cy="7" r="6" fill="#5a5a5a"/><path d="M4 2q4 1 2 5-2 2-3 0zM9 5l3 1-2 6q-2-2-1-7z" fill="#888"/></svg></div>
  <div class="prow r2"><label class="plab" for="fs">样式:</label><div class="combowrap dimsel"><select id="fs" class="combo" disabled><option>Normal</option></select></div><button class="flatbtn embedbtn ms-1">嵌入...</button></div>
  <div class="prow r3"><label class="plab" for="sz">大小:</label><input id="sz" class="hot w22" value="32.0"><span>磅</span><label for="ls" class="ms-auto">字母间距:</label><input id="ls" class="hot w16" value="0.0"></div>
  <div class="prow"><span class="plab">颜色:</span><button class="swatch yel colbtn" aria-label="文本颜色"></button><input type="checkbox" id="kern" checked class="me-1"><label for="kern">自动调整字距</label></div>
  <div class="prow"><label class="plab" for="aa">消除锯齿:</label><div class="combowrap aasel"><select id="aa" class="combo"><option>可读性消除锯齿</option></select></div></div>
  <div class="prow r6"><button class="toolbtn down mini" aria-label="可选"><svg class="i14"><path d="M0 0h11v14H0z" fill="#bbb"/><path d="M2 3h7M5.500 3v8" stroke="#222" stroke-width="2"/><path d="M13 0v14" stroke="#ddd"/></svg></button><button class="toolbtn mini" disabled aria-label="HTML"><svg class="i12"><path d="M5 1L1 6l4 5M7 1l4 5-4 5" fill="none" stroke="#666" stroke-width="1.500"/></svg></button><button class="toolbtn mini" disabled aria-label="边框"><svg class="i12"><path d="M.500.500h11v11H.500zM3 3h7M3 6h7M3 9h7" fill="none" stroke="#666"/></svg></button><button class="toolbtn down mini subt ms-auto me-3" aria-label="下标">T<span>1</span></button></div>
  <button class="sect"><i class="caret-r"></i>段落</button>
  <button class="sect"><i class="caret-r"></i>选项</button>
  <button class="sect"><i class="caret-r"></i>辅助功能</button>
  <button class="sect"><i class="caret-d"></i>滤镜</button>
  <div class="fbar d-flex"><button class="toolbtn wide" aria-label="添加滤镜"><svg width="22" height="12"><path d="M5 1h3v4h4v3H8v4H5V8H1V5h4zM14 4h8l-4 5z"/></svg></button><button class="toolbtn" disabled aria-label="删除滤镜"><svg class="i12"><path d="M0 5h12v2H0z" fill="#666"/></svg></button><button class="toolbtn gearb ms-auto" aria-label="选项"><svg width="26" height="14"><use href="#gear" width="14" height="14"/><path d="M17 5h8l-4 5z"/></svg></button></div>
  <table class="gridx ftable"><thead><tr><th class="c142">属性</th><th>值</th><th class="c16"></th></tr></thead></table>
 </div>
 <div class="vbar pbar"><i class="tri-u"></i><div class="vthumb"></div><i class="tri-d"></i></div>
 </div>
 <div class="panelgap"></div>
 <div class="tabs d-flex"><button class="on pe-3">库</button><button class="burger" aria-label="选项"><svg class="i12"><use href="#burger"/></svg></button></div>
 <section class="panel libbar d-flex align-items-center"><div class="combowrap flex-grow-1"><select class="combo" aria-label="库文档"><option>补间形状动画掉落的文字变形.fla</option></select></div><svg class="pin" width="16" height="12"><path d="M0 5h6V2h2l1 1h4V1h2v10h-2V9H9l-1 1H6V7H0z"/></svg><svg width="15" height="15"><path d="M0 0h9v3H5v8H0z"/><path d="M6 4h9v11H6z"/></svg></section>
 <div class="libprev"></div>
 <div class="libfind d-flex align-items-center"><span>空的库</span><div class="search d-flex align-items-center flex-grow-1 ps-1"><svg class="i14" color="#333"><use href="#lens"/></svg><input class="flex-grow-1 border-0 bg-transparent" aria-label="搜索库"></div></div>
 <section class="liblist flex-grow-1"><table class="gridx w-100"><thead><tr><th><span class="d-flex align-items-center justify-content-between pe-1">名称<i class="caret-d"></i></span></th><th class="c71">链接</th><th class="c71">使用次数</th><th class="c129">修改日期</th><th class="c71">类型</th><th class="c16"></th></tr></thead></table></section>
 <div class="liblist foot d-flex"><div class="libicons d-flex align-items-center gap-1"><svg class="i12"><use href="#page"/></svg><svg class="i12 me-1"><use href="#folder"/></svg><svg class="i12 me-1" viewBox="0 0 12 12"><circle cx="6" cy="6" r="6" fill="#bbb"/><path d="M5 5h2v5H5zM5 2h2v2H5z" fill="#333"/></svg><svg class="i12"><use href="#trash"/></svg></div><div class="sbar flex-grow-1 d-flex align-items-center justify-content-between px-1"><i class="tri-l"></i><i class="tri-r"></i></div></div>
</aside>
</div>
</div>

<div class="ctx dropdown-menu position-absolute">
<button class="dropdown-item">创建补间动画</button><hr class="dropdown-divider">
<button class="dropdown-item">剪切(T)<kbd>Ctrl+X</kbd></button><button class="dropdown-item">复制(C)<kbd>Ctrl+C</kbd></button><button class="dropdown-item">粘贴到中心位置(P)<kbd>Ctrl+V</kbd></button><hr class="dropdown-divider">
<button class="dropdown-item" disabled>复制动画</button><button class="dropdown-item" disabled>粘贴动画</button><button class="dropdown-item" disabled>选择性粘贴动画...</button><button class="dropdown-item" disabled>另存为动画预设...</button><hr class="dropdown-divider">
<button class="dropdown-item">全选(L)<kbd>Ctrl+A</kbd></button><button class="dropdown-item">取消全选(V)<kbd>Ctrl+Shift+A</kbd></button><button class="dropdown-item">反转选区(I)</button><hr class="dropdown-divider">
<button class="dropdown-item sub">变形(T)</button><button class="dropdown-item sub">排列(A)</button><button class="dropdown-item sub">对齐(N)</button><hr class="dropdown-divider">
<button class="dropdown-item hov">分离(K)<kbd>Ctrl+B</kbd></button><button class="dropdown-item">分散到图层(D)<kbd>Ctrl+Shift+D</kbd></button><button class="dropdown-item">分布到关键帧(F)<kbd>Ctrl+Shift+K</kbd></button><hr class="dropdown-divider">
<button class="dropdown-item" disabled>可滚动(R)</button><hr class="dropdown-divider">
<button class="dropdown-item sub">运动路径</button><hr class="dropdown-divider">
<button class="dropdown-item">转换为元件(C)...<kbd>F8</kbd></button><button class="dropdown-item">转换为位图(B)</button>
</div>
<svg class="curs position-absolute" width="14" height="21"><path d="M1 1l11 11H8l3 6-3 1-2-6-5 4z" fill="#fff" stroke="#222"/></svg>
<div class="ime position-absolute d-flex align-items-center justify-content-between"><svg class="i16"><path d="M1 1h14v14H1zM4 1v14" fill="none" stroke="currentColor" stroke-width="1.500"/><circle cx="10" cy="8" r="3.500" fill="none" stroke="currentColor" stroke-width="1.500"/><path d="M10 9l4 4" stroke="currentColor" stroke-width="1.500"/></svg><span>中</span><svg class="i14"><path d="M9 0q3 9-9 11 4 4 9 2 7-5 0-13z"/></svg><svg width="12" height="10"><circle cx="3" cy="5" r="1.500" fill="none" stroke="currentColor"/><path d="M8 3h3v3l-2 3V6H8z"/></svg><svg width="15" height="11"><path d="M0 1h15v9H0z"/><path d="M2 3.500h11M2 6h11" stroke="#fff" stroke-dasharray="1 1"/><path d="M4 8.500h7" stroke="#fff"/></svg><svg width="11" height="14"><circle cx="5.500" cy="3.500" r="3"/><path d="M0 12q0-5 3-5h5q3 0 3 5l-2 2H2z"/></svg><svg class="i14"><path d="M2 12l6-6" stroke="currentColor" stroke-width="3"/><path d="M7 6q-1-5 4-6L9 3l2 2 3-2q0 6-6 5z"/></svg></div>
<i class="meter position-absolute"></i>
<div class="wmark position-absolute d-flex align-items-center"><svg width="38" height="38" viewBox="0 0 38 38"><rect width="38" height="38" rx="7"/><path d="M11 6l8-3 10 13-5 5-9-8zM4 14l7 5-5 5zM13 20q7-8 14 0-1 8-8 9l-8 4q-5-2-2-5l5-2zM18 20v6" fill="#333"/><path d="M16 20h8M20 20v7" stroke="#999" stroke-width="2"/></svg><span>tafe.cc</span></div>
<script>
const r=document.getElementById('ruler');
for(let n=1;n<90;n++){const c=document.createElement('i');let h='';
if(n%5===0)h+=`<b class="fr">${n}</b>`;
if(n%24===0){h+=`<b class="se">${n/24}s</b>`;c.className='sec'}
c.innerHTML=h;r.append(c)}
</script>
</body>
</html>
